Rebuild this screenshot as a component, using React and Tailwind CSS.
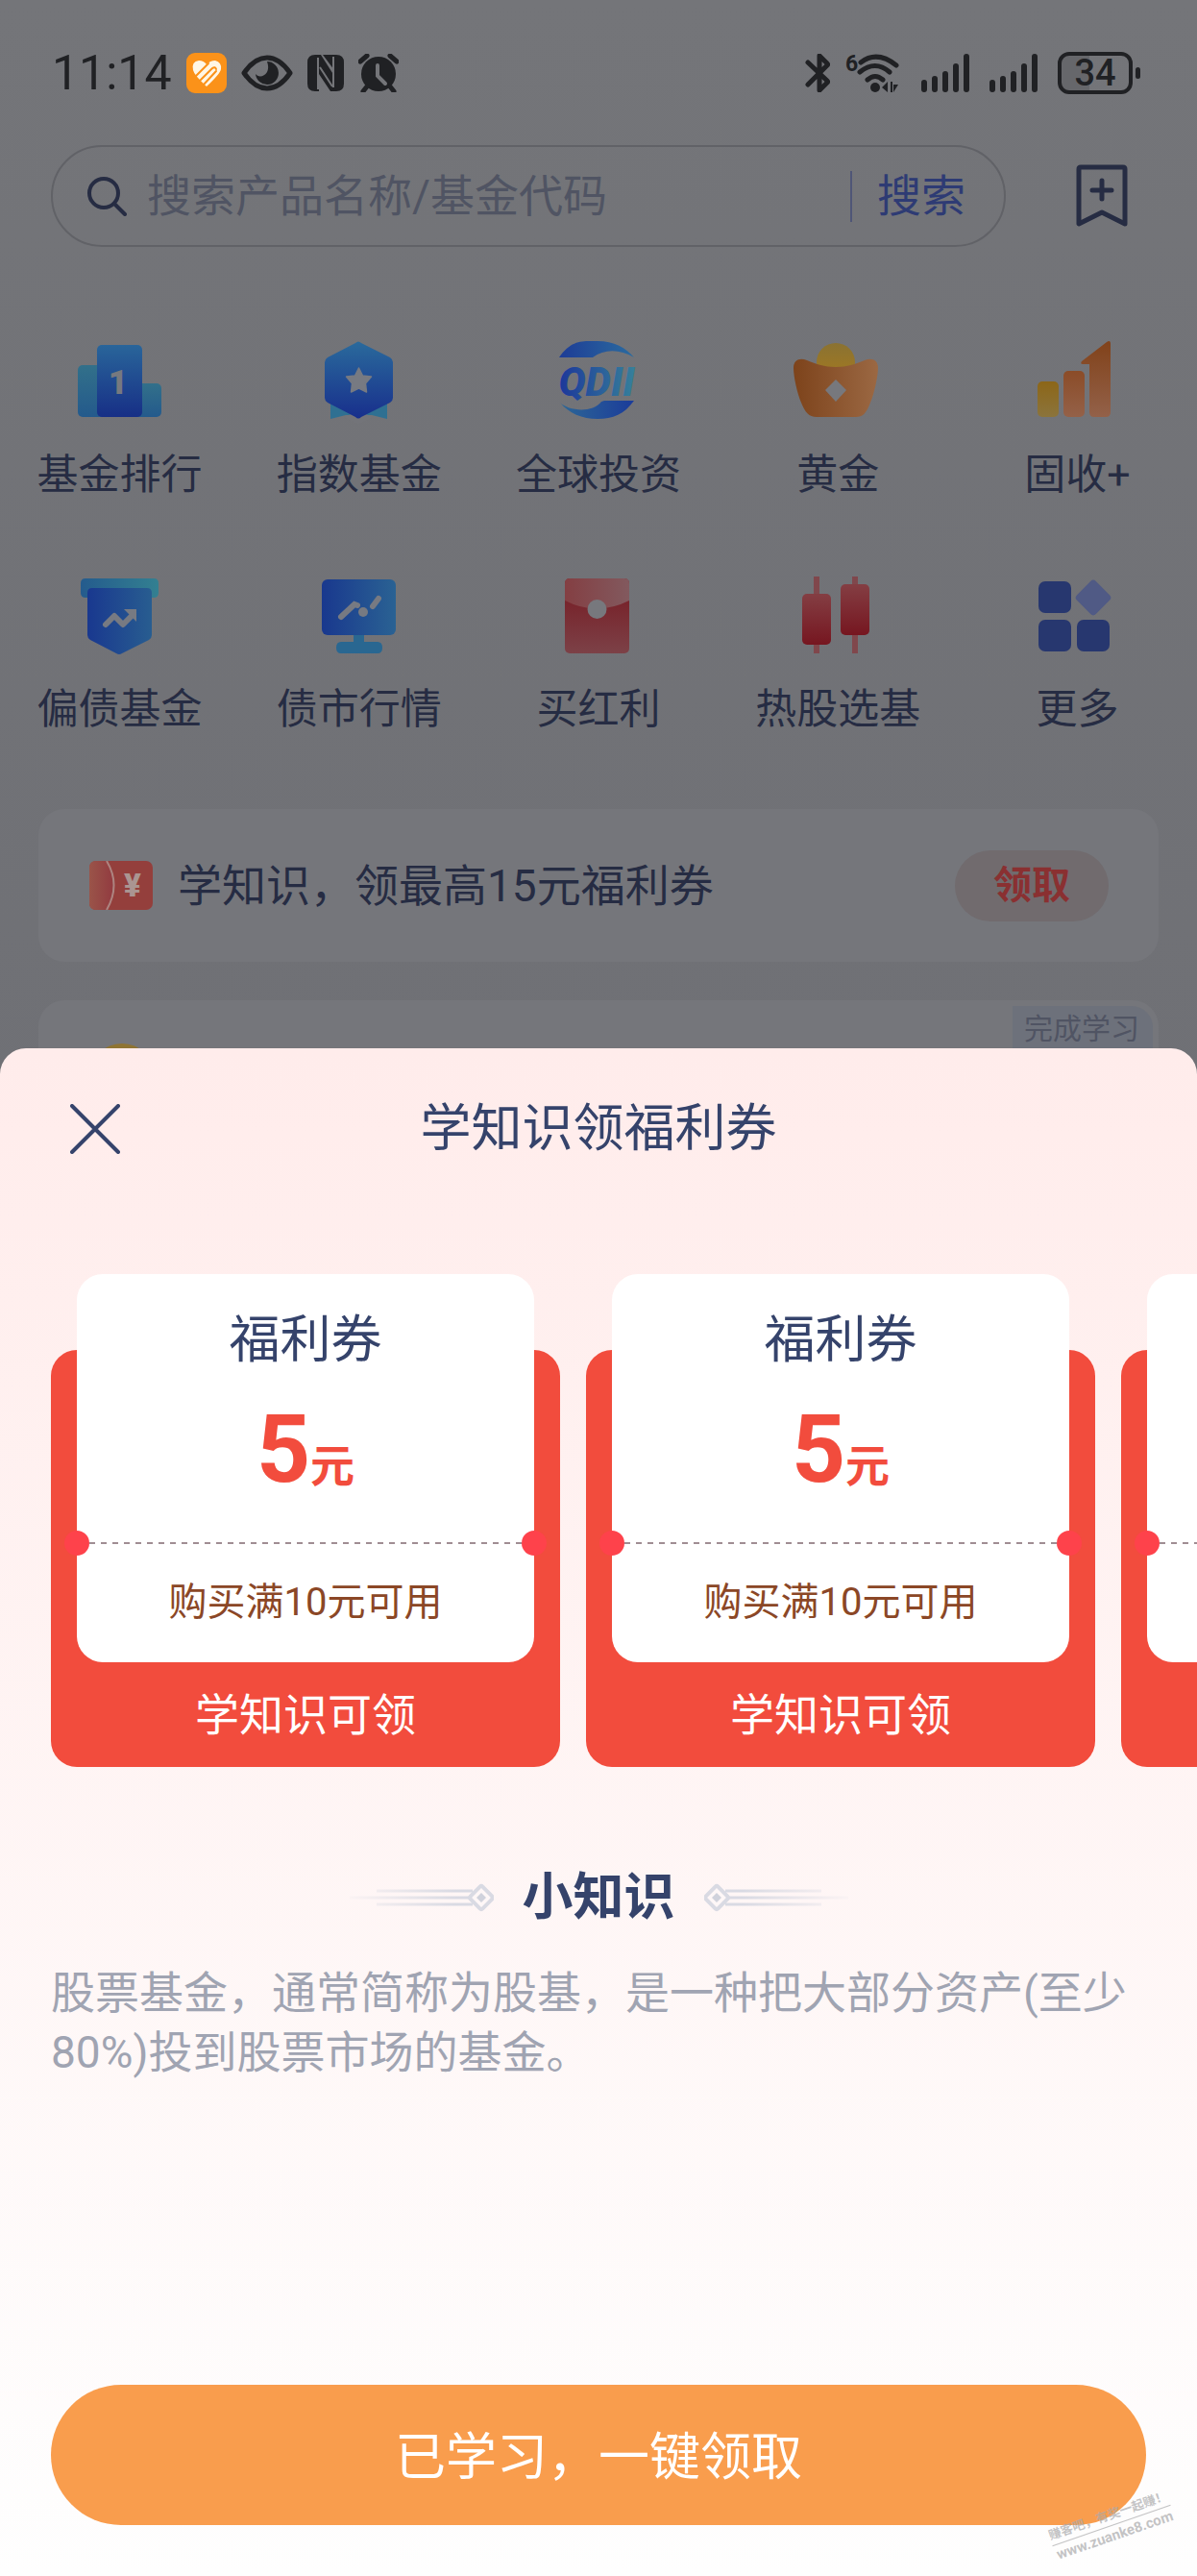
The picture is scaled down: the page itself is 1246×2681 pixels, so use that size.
import React, { useState } from 'react';

const shortcuts = [
    { name: '基金排行', Icon: RankIcon },
    { name: '指数基金', Icon: IndexIcon },
    { name: '全球投资', Icon: QdiiIcon },
    { name: '黄金', Icon: GoldIcon },
    { name: '固收+', Icon: FixedIncomeIcon },
    { name: '偏债基金', Icon: BondFundIcon },
    { name: '债市行情', Icon: BondMarketIcon },
    { name: '买红利', Icon: DividendIcon },
    { name: '热股选基', Icon: CandleIcon },
    { name: '更多', Icon: MoreIcon },
];

const coupons = [
    { id: 1, title: '福利券', amount: 5, rule: '购买满10元可用', status: '学知识可领' },
    { id: 2, title: '福利券', amount: 5, rule: '购买满10元可用', status: '学知识可领' },
    { id: 3, title: '福利券', amount: 5, rule: '购买满10元可用', status: '学知识可领' },
];

function Gradient({ id, from, to, horizontal }) {
    return (
        <linearGradient id={id} x1="0" y1="0" x2={horizontal ? 1 : 0} y2={horizontal ? 0 : 1}>
            <stop offset="0" stopColor={from} />
            <stop offset="1" stopColor={to} />
        </linearGradient>
    );
}

function RankIcon() {
    return (
        <svg viewBox="0 0 100 100" className="size-[100px]" aria-hidden="true">
            <defs>
                <Gradient id="rank-side" from="#32708a" to="#245a8c" />
                <Gradient id="rank-main" from="#29659a" to="#172f86" />
            </defs>
            <rect x="6" y="33" width="40" height="54" rx="5" fill="url(#rank-side)" />
            <rect x="52" y="52" width="41" height="35" rx="5" fill="url(#rank-side)" />
            <rect x="26" y="12" width="47" height="75" rx="5" fill="url(#rank-main)" />
            <text x="48" y="63" textAnchor="middle" fontFamily="Roboto, sans-serif" fontWeight="900" fontSize="35" fill="#77797f">1</text>
        </svg>
    );
}

function IndexIcon() {
    return (
        <svg viewBox="0 0 100 100" className="size-[100px]" aria-hidden="true">
            <defs>
                <Gradient id="index-main" from="#2a6a9c" to="#182f8c" />
            </defs>
            <path d="M20 64h59v25l-16-4H36l-16 4z" fill="#2f7092" />
            <path d="M34 87l15-6 15 6-15 8z" fill="#737479" />
            <path d="M46 10q3-3 6 0l30 15q3 2 3 5v37q0 3-3 5L52 87q-3 3-6 0L17 72q-3-2-3-5V30q0-3 3-5z" fill="url(#index-main)" />
            <path d="M49.500 36l4 8 9 1-6 7 1 9-8-4-8 4 1-9-6-7 9-1z" fill="#777a82" stroke="#777a82" strokeWidth="1.500" strokeLinejoin="round" />
        </svg>
    );
}

function QdiiIcon() {
    return (
        <svg viewBox="0 0 100 100" className="size-[100px]" aria-hidden="true">
            <defs>
                <Gradient id="qdii-top" from="#1d3c96" to="#2b6b9f" horizontal />
                <Gradient id="qdii-bottom" from="#2d6796" to="#1b3c9a" horizontal />
                <Gradient id="qdii-text" from="#1c379a" to="#36809b" horizontal />
            </defs>
            <path d="M9 25C22 6 34 8 49 8c17 0 30 7 38 17-15-9-31-9-43 0z" fill="url(#qdii-top)" />
            <path d="M10 72c9 9 34 11 43-1l3-1h31C77 84 65 89 49 89c-16 0-30-6-39-17z" fill="url(#qdii-bottom)" />
            <text x="48" y="65" textAnchor="middle" fontFamily="'Liberation Sans Narrow', Roboto, sans-serif" fontWeight="900" fontStyle="italic" fontSize="42" fill="url(#qdii-text)">QDII</text>
        </svg>
    );
}

function GoldIcon() {
    return (
        <svg viewBox="0 0 100 100" className="size-[100px]" aria-hidden="true">
            <defs>
                <Gradient id="gold-ball" from="#8a7232" to="#a57a1e" />
                <Gradient id="gold-pot" from="#7d431b" to="#9b6843" horizontal />
            </defs>
            <circle cx="48" cy="30" r="20" fill="url(#gold-ball)" />
            <path d="M4 36c0-9 7-11 14-8 10 4 18 7 30 7s20-3 30-7c7-3 14-1 14 8 0 8-4 27-8 36-4 11-8 15-15 15H28c-8 0-12-5-16-15-4-9-8-27-8-36z" fill="url(#gold-pot)" />
            <path d="M48 48l11 11-11 12-11-12z" fill="#77787d" />
        </svg>
    );
}

function FixedIncomeIcon() {
    return (
        <svg viewBox="0 0 100 100" className="size-[100px]" aria-hidden="true">
            <defs>
                <Gradient id="fixed-low" from="#8c6618" to="#8b743c" />
                <Gradient id="fixed-mid" from="#8b4c28" to="#946148" />
                <Gradient id="fixed-high" from="#81421a" to="#936149" />
            </defs>
            <rect x="9" y="50" width="22" height="37" rx="5" fill="url(#fixed-low)" />
            <rect x="36" y="39" width="22" height="48" rx="5" fill="url(#fixed-mid)" />
            <path d="M81 9q4-3 4 2v71q0 5-5 5H68q-5 0-5-5V32h-7q-3 0-1-3z" fill="url(#fixed-high)" />
        </svg>
    );
}

function BondFundIcon() {
    return (
        <svg viewBox="0 0 100 100" className="size-[100px]" aria-hidden="true">
            <defs>
                <Gradient id="bond-top" from="#245b8d" to="#338091" horizontal />
                <Gradient id="bond-main" from="#19388f" to="#285d90" horizontal />
            </defs>
            <path d="M14 11h71q5 0 5 5v10q0 5-5 5H14q-5 0-5-5V16q0-5 5-5z" fill="url(#bond-top)" />
            <path d="M21 21h57q5 0 5 5v44q0 3-3 5L52 89q-3 2-6 0L19 75q-3-2-3-5V26q0-5 5-5z" fill="url(#bond-main)" />
            <path d="M35 59l9-9 9 9 9-9" fill="none" stroke="#777a82" strokeWidth="6" strokeLinejoin="round" strokeLinecap="round" />
            <path d="M54 43h13v13z" fill="#777a82" />
        </svg>
    );
}

function BondMarketIcon() {
    return (
        <svg viewBox="0 0 100 100" className="size-[100px]" aria-hidden="true">
            <defs>
                <Gradient id="market-main" from="#19388e" to="#2a6293" horizontal />
            </defs>
            <path d="M44 68h11v9h14q5 0 5 6t-5 6H31q-5 0-5-6t5-6h13z" fill="#296791" />
            <rect x="11" y="12" width="77" height="58" rx="6" fill="url(#market-main)" />
            <path d="M31 51l14-13 3 1M64 40l6-8" fill="none" stroke="#777a82" strokeWidth="6" strokeLinecap="round" />
            <circle cx="54" cy="46" r="5" fill="#777a82" />
        </svg>
    );
}

function DividendIcon() {
    return (
        <svg viewBox="0 0 100 100" className="size-[100px]" aria-hidden="true">
            <defs>
                <Gradient id="dividend-main" from="#761820" to="#7c4147" />
                <Gradient id="dividend-flap" from="#843f43" to="#82595e" horizontal />
            </defs>
            <rect x="15" y="11" width="67" height="78" rx="5" fill="url(#dividend-main)" />
            <path d="M20 11h57q5 0 5 5v18q-34 17-67 0V16q0-5 5-5z" fill="url(#dividend-flap)" />
            <circle cx="48.500" cy="43" r="10" fill="#77787d" />
        </svg>
    );
}

function CandleIcon() {
    return (
        <svg viewBox="0 0 100 100" className="size-[100px]" aria-hidden="true">
            <defs>
                <Gradient id="candle" from="#843e43" to="#761620" />
            </defs>
            <path d="M28 9v80M68 9v80" stroke="#80474c" strokeWidth="6" />
            <rect x="13" y="27" width="30" height="53" rx="5" fill="url(#candle)" />
            <rect x="53" y="17" width="30" height="53" rx="5" fill="url(#candle)" />
        </svg>
    );
}

function MoreIcon() {
    return (
        <svg viewBox="0 0 100 100" className="size-[100px]" aria-hidden="true">
            <rect x="10" y="14" width="34" height="33" rx="7" fill="#27376f" />
            <rect x="10" y="54" width="34" height="33" rx="7" fill="#27376f" />
            <rect x="50" y="54" width="34" height="33" rx="7" fill="#27376f" />
            <rect x="53" y="17" width="28" height="28" rx="4" transform="rotate(45 67 31)" fill="#505a85" />
        </svg>
    );
}

function SignalIcon() {
    return (
        <svg viewBox="0 0 51 40" className="h-10 w-[51px]" aria-hidden="true">
            <path d="M3 30v7M14 26v11M25 21v16M36 13v24M47 3v34" stroke="#202124" strokeWidth="6" strokeLinecap="round" />
        </svg>
    );
}

const StatusBar = () => (
    <div className="flex h-[151px] items-center justify-between pr-[59px] pl-[54px] text-[#202124]">
        <div className="flex items-center gap-[15px]">
            <span className="text-[50px] leading-[60px]">11:14</span>
            <svg viewBox="0 0 42 42" className="size-[42px]" aria-hidden="true">
                <rect width="42" height="42" rx="9" fill="#fb9219" />
                <path d="M7 18q-2-9 6-10 5 0 8 4 4-4 9-4 7 2 6 9-1 5-15 18Q8 23 7 18z" fill="#fff7e6" />
                <path d="M10 24L23 11M14 29l13-13q3-2 4 1M18 33L31 19" stroke="#fb9219" strokeWidth="2" fill="none" strokeLinecap="round" />
            </svg>
            <svg viewBox="0 0 54 40" className="h-10 w-[54px]" aria-hidden="true">
                <path d="M3 20Q14 4 27 4t24 16Q40 36 27 36T3 20z" fill="none" stroke="#202124" strokeWidth="5" strokeLinejoin="round" />
                <path d="M27 8a12 12 0 1 1-12 13c3 4 9 3 12-2 2-4 1-8 0-11z" fill="#202124" />
            </svg>
            <svg viewBox="0 0 38 38" className="size-[38px]" aria-hidden="true">
                <path d="M8 0h2v38H8q-8 0-8-8V8q0-8 8-8zM30 0q8 0 8 8v22q0 8-8 8h-2V0z" fill="#202124" />
                <path d="M8 0h6l14 22v16h-4L12 20v18H8zM16 0h12v16z" fill="#202124" />
                <path d="M11 3v33M27 2v32M13 13l13 20" stroke="#747579" strokeWidth="2" />
            </svg>
            <svg viewBox="0 0 42 40" className="h-10 w-[42px]" aria-hidden="true">
                <circle cx="21" cy="21" r="18" fill="#202124" />
                <path d="M2 8l7-6M40 8l-7-6M9 34l-4 5M33 34l4 5" stroke="#202124" strokeWidth="5" strokeLinecap="round" />
                <path d="M20 12v11l8 8" fill="none" stroke="#747579" strokeWidth="4" strokeLinecap="round" />
            </svg>
        </div>
        <div className="flex items-center gap-5">
            <div className="flex items-center gap-[15px]">
                <svg viewBox="0 0 26 40" className="h-10 w-[26px]" aria-hidden="true">
                    <path d="M3 9l20 19q1 1 0 2l-8 8V2l8 8q1 1 0 2L3 32" fill="none" stroke="#202124" strokeWidth="5" strokeLinecap="round" strokeLinejoin="round" />
                </svg>
                <svg viewBox="0 0 60 42" className="h-[42px] w-[60px]" aria-hidden="true">
                    <text x="1" y="19" fontFamily="Roboto, sans-serif" fontSize="23" fontWeight="700" fill="#202124">6</text>
                    <path d="M17 10q17-13 37 3M16 20q16-13 31 0M24 28q8-7 16 0" fill="none" stroke="#202124" strokeWidth="5" strokeLinecap="round" />
                    <circle cx="32" cy="36" r="5" fill="#202124" />
                    <path d="M45 30v11l-6-5zM48 30h2v11h-2zM51 33h5l-5 8z" fill="#202124" />
                </svg>
            </div>
            <SignalIcon />
            <SignalIcon />
            <div className="flex items-center gap-[3px]">
                <div className="flex h-11 w-[78px] items-center justify-center rounded-xl border-4 border-[#202124] bg-linear-to-r from-[#66676b] from-42% to-transparent to-42% text-[38px] leading-9 font-medium">34</div>
                <div className="h-3 w-[5px] rounded-full bg-[#202124]" />
            </div>
        </div>
    </div>
);

const SearchBar = () => {
    const [keyword, setKeyword] = useState('');

    return (
        <div className="flex items-center justify-between pr-[72px] pl-[53px]">
            <form onSubmit={e => e.preventDefault()} className="flex h-[106px] w-[994px] items-center rounded-full border-2 border-[#616267] pr-10 pl-[35px]">
                <svg viewBox="0 0 42 42" className="size-[42px] shrink-0" aria-hidden="true">
                    <circle cx="18" cy="18" r="15" fill="none" stroke="#262c43" strokeWidth="4" />
                    <path d="M29 29l11 11" stroke="#262c43" strokeWidth="4" strokeLinecap="round" />
                </svg>
                <input
                    type="text"
                    aria-label="搜索产品名称/基金代码"
                    placeholder="搜索产品名称/基金代码"
                    value={keyword}
                    onChange={e => setKeyword(e.target.value)}
                    className="ml-[21px] h-[66px] min-w-0 flex-1 bg-transparent text-[46px] text-[#262c43] outline-none placeholder:text-[#505463]"
                />
                <div className="mr-[26px] h-[53px] w-0.5 bg-[#4f5677]" />
                <button type="submit" className="text-[46px] leading-[66px] text-[#2e3b74]">搜索</button>
            </form>
            <button type="button" aria-label="收藏">
                <svg viewBox="0 0 54 66" className="h-[66px] w-[54px]" aria-hidden="true">
                    <path d="M3 5q0-2 2-2h44q2 0 2 2v57L27 50 3 62z" fill="none" stroke="#262c43" strokeWidth="5" strokeLinejoin="round" />
                    <path d="M27 17v19M17 27h20" stroke="#262c43" strokeWidth="5" strokeLinecap="round" />
                </svg>
            </button>
        </div>
    );
};

const CouponCard = ({ coupon }) => (
    <li className="w-[530px] shrink-0 rounded-[27px] bg-[#f24c3d] px-[27px]">
        <div className="-mt-[79px] rounded-[27px] bg-white text-center">
            <h3 className="pt-9 text-[53px] leading-[66px] text-[#35436b]">{coupon.title}</h3>
            <p className="mt-8 flex items-baseline justify-center font-bold text-[#f24c3d]">
                <span className="text-[98px] leading-[98px]">{coupon.amount}</span>
                <span className="text-[46px] leading-[46px]">元</span>
            </p>
            <div className="-mx-[13px] mt-[35px] flex items-center">
                <div className="size-[26px] rounded-full bg-[#fe424b]" />
                <svg className="h-0.5 flex-1" aria-hidden="true">
                    <line x1="0" y1="1" x2="100%" y2="1" stroke="#a08d93" strokeWidth="2" strokeDasharray="6 6" />
                </svg>
                <div className="size-[26px] rounded-full bg-[#fe424b]" />
            </div>
            <p className="pt-4 pb-[29px] text-[40px] leading-[66px] text-[#8b4726]">{coupon.rule}</p>
        </div>
        <p className="flex h-[109px] items-center justify-center text-[46px] leading-[66px] text-white">{coupon.status}</p>
    </li>
);

const Ornament = ({ id, className }) => (
    <svg viewBox="0 0 150 30" className={className} aria-hidden="true">
        <defs>
            <linearGradient id={id} gradientUnits="userSpaceOnUse" x1="0" y1="0" x2="110" y2="0">
                <stop offset="0" stopColor="#d9dae3" stopOpacity="0.100" />
                <stop offset="1" stopColor="#d9dae3" />
            </linearGradient>
        </defs>
        <path d="M28 8h100M0 15h124M28 22h100" stroke={`url(#${id})`} strokeWidth="3" />
        <rect x="128" y="6" width="18" height="18" rx="2" transform="rotate(45 137 15)" fill="#fef7f7" stroke="#d9dae3" strokeWidth="4" />
        <path d="M137 10l5 5-5 5-5-5z" fill="#d0d2dc" />
    </svg>
);

const App = () => {
    const [open, setOpen] = useState(true);

    return (
        <div className="relative flex min-h-screen flex-col overflow-hidden bg-linear-to-b from-[#747579] to-[#6f7075] to-45% font-[Roboto,'Noto_Sans_CJK_SC',sans-serif]">
            <StatusBar />
            <SearchBar />

            <nav className="mt-[90px] grid grid-cols-5 gap-y-16">
                {shortcuts.map(({ name, Icon }) => (
                    <a key={name} href="#" className="flex flex-col items-center gap-3.5 text-[43px] leading-[66px] whitespace-nowrap text-[#262c43]">
                        <Icon />
                        {name}
                    </a>
                ))}
            </nav>

            <div className="mx-10 mt-[71px] flex h-[159px] items-center rounded-[27px] bg-[#75767b] pr-[52px] pl-[53px]">
                <svg viewBox="0 0 66 51" className="h-[51px] w-[66px]" aria-hidden="true">
                    <defs>
                        <Gradient id="ticket" from="#9a5449" to="#923b40" horizontal />
                    </defs>
                    <rect width="66" height="51" rx="7" fill="#943f3c" />
                    <path d="M7 0h11q14 25 0 51H7q-7 0-7-7V7q0-7 7-7z" fill="url(#ticket)" />
                    <path d="M18 0q15 25 0 51" fill="none" stroke="#ad8480" strokeWidth="2" />
                    <text x="45" y="37" textAnchor="middle" fontFamily="Roboto, sans-serif" fontWeight="900" fontSize="33" fill="#aa9591">¥</text>
                </svg>
                <p className="ml-[26px] flex-1 text-[46px] leading-[66px] text-[#262c43]">学知识，领最高15元福利券</p>
                <button type="button" onClick={() => setOpen(true)} className="h-[74px] w-40 rounded-full bg-[#716b6e] text-[40px] font-bold text-[#8a3031]">领取</button>
            </div>

            <div className="mx-10 mt-10 flex h-[78px] justify-between rounded-t-[27px] bg-[#75767b] pt-1.5 pr-1.5 pl-[53px]">
                <svg viewBox="0 0 68 32" className="mt-[39px] h-8 w-[68px]" aria-hidden="true">
                    <circle cx="34" cy="34" r="34" fill="#8f7433" />
                </svg>
                <span className="h-[72px] rounded-tr-[22px] bg-[#6d717b] pr-3.5 pl-3 text-[30px] leading-[48px] text-[#505463]">完成学习</span>
            </div>

            {open && (
                <section role="dialog" aria-labelledby="sheet-title" className="relative -mt-7 flex flex-1 flex-col rounded-t-[27px] bg-linear-to-b from-[#ffeceb] to-[#fefefe] pb-[53px]">
                    <header className="grid h-[168px] grid-cols-[1fr_auto_1fr] items-center px-[73px]">
                        <button type="button" aria-label="关闭" onClick={() => setOpen(false)} className="justify-self-start">
                            <svg viewBox="0 0 52 52" className="size-[52px]" aria-hidden="true">
                                <path d="M2 2l48 48M50 2L2 50" stroke="#35436b" strokeWidth="4" strokeLinecap="round" />
                            </svg>
                        </button>
                        <h2 id="sheet-title" className="text-[53px] leading-[66px] text-[#35436b]">学知识领福利券</h2>
                    </header>

                    <ul className="flex gap-[27px] overflow-hidden pt-[146px] pl-[53px]">
                        {coupons.map(coupon => (
                            <CouponCard key={coupon.id} coupon={coupon} />
                        ))}
                    </ul>

                    <div className="mt-[103px] flex items-center justify-center gap-[30px]">
                        <Ornament id="ornament-left" className="h-[30px] w-[150px]" />
                        <h3 className="text-[53px] leading-[66px] font-bold text-[#35436b]">小知识</h3>
                        <Ornament id="ornament-right" className="h-[30px] w-[150px] -scale-x-100" />
                    </div>
                    <p className="mx-[53px] mt-[35px] text-[46px] leading-[62px] text-[#a0a4b2]">股票基金，通常简称为股基，是一种把大部分资产(至少80%)投到股票市场的基金。</p>

                    <button type="button" className="mx-[53px] mt-auto h-[146px] rounded-full bg-[#f99d4d] pt-2 text-[53px] text-white">已学习，一键领取</button>

                    <div className="pointer-events-none absolute right-6 bottom-8 -rotate-19 text-center font-bold text-[#a9a9ab]/70">
                        <p className="border-b border-[#a9a9ab]/70 text-[13px] leading-5">赚客吧，有奖一起赚！</p>
                        <p className="text-[15px] leading-5">www.zuanke8.com</p>
                    </div>
                </section>
            )}
        </div>
    );
};

export default App;
